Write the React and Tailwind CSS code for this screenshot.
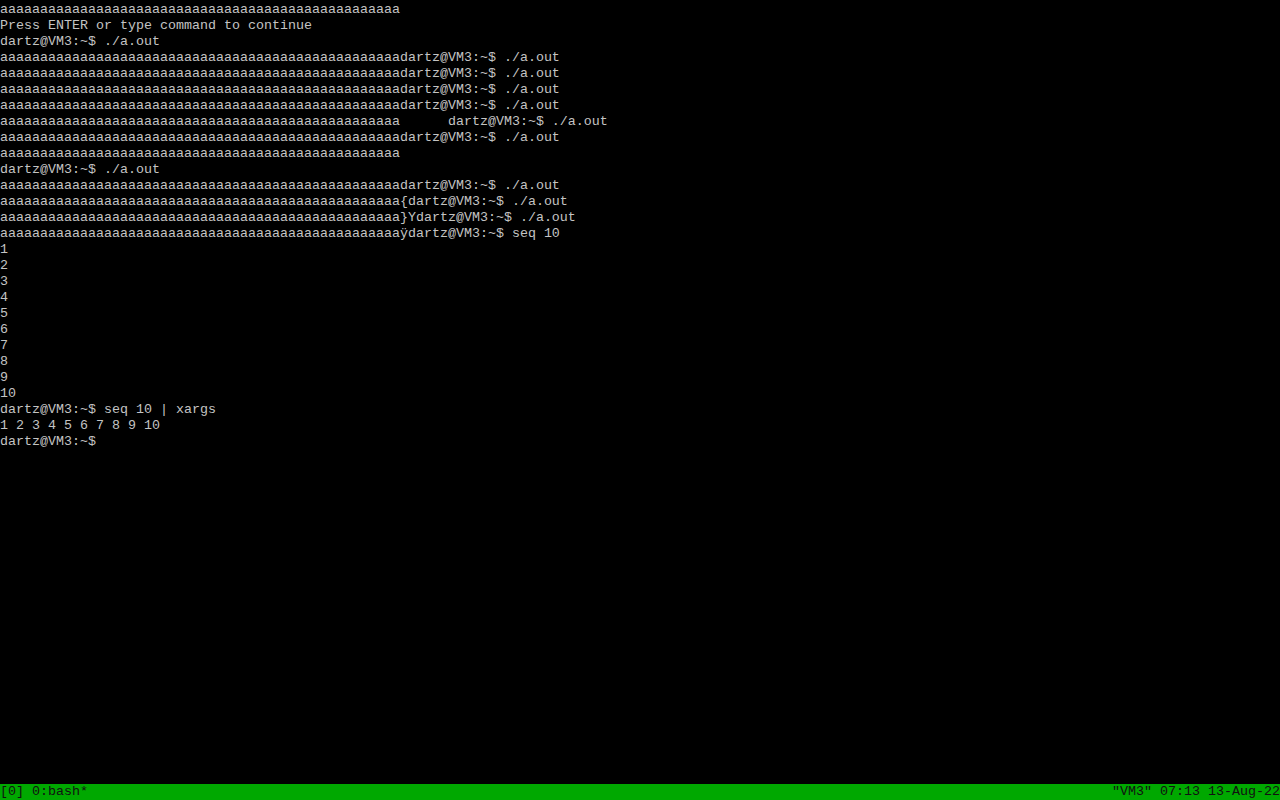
const A = "a".repeat(50);
const P = "dartz@VM3:~$ ";

const lines = [
  A,
  "Press ENTER or type command to continue",
  P + "./a.out",
  A + P + "./a.out",
  A + P + "./a.out",
  A + P + "./a.out",
  A + P + "./a.out",
  A + "      " + P + "./a.out",
  A + P + "./a.out",
  A,
  P + "./a.out",
  A + P + "./a.out",
  A + "{" + P + "./a.out",
  A + "}Y" + P + "./a.out",
  A + "ÿ" + P + "seq 10",
  "1",
  "2",
  "3",
  "4",
  "5",
  "6",
  "7",
  "8",
  "9",
  "10",
  P + "seq 10 | xargs",
  "1 2 3 4 5 6 7 8 9 10",
  P,
];

export default function App() {
  return (
    <div className="w-[1280px] h-[800px] bg-black flex flex-col overflow-hidden font-['Liberation_Mono',monospace] text-[13.33px] leading-5">
      <div className="flex-1 text-[#c4c4c4]">
        {lines.map((line, i) => (
          <div key={i} className="h-4 whitespace-pre">
            {line}
          </div>
        ))}
      </div>
      {/* tmux status line */}
      <div className="h-4 bg-[#00a800] text-[#111] flex justify-between whitespace-pre">
        <span className="-mt-[2px]">[0] 0:bash*</span>
        <span className="-mt-[2px]">"VM3" 07:13 13-Aug-22</span>
      </div>
    </div>
  );
}
